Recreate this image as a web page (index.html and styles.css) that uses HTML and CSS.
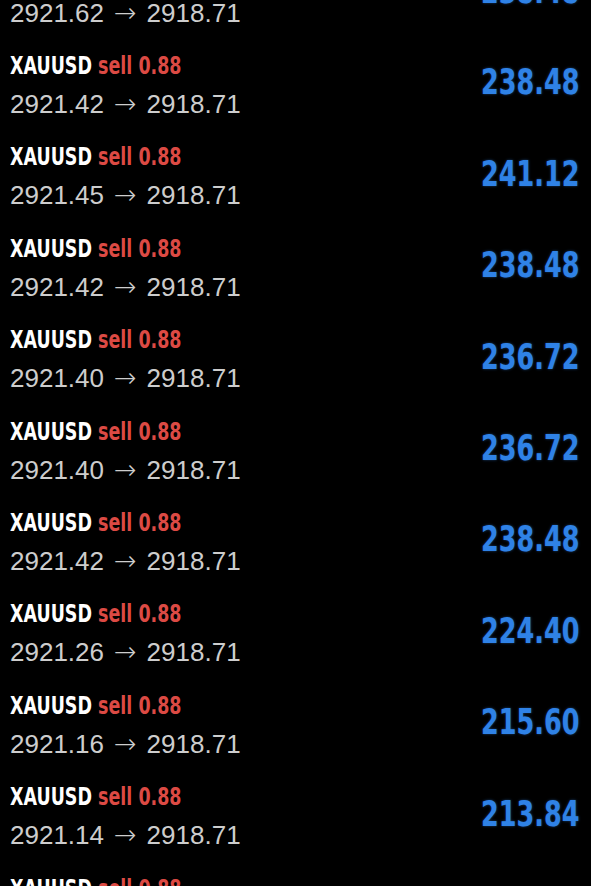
FILE: index.html
```html
<!DOCTYPE html>
<html lang="en">
<head>
  <meta charset="UTF-8" />
  <meta name="viewport" content="width=device-width, initial-scale=1.0"/>
  <title>Trades</title>
  <link rel="stylesheet" href="styles.css">
</head>
<body>
  <div class="trade-list">
    <div class="trade">
      <div class="info">
        <div class="title"><span class="symbol">XAUUSD</span> <span class="side">sell 0.88</span></div>
        <div class="prices">2921.62<span class="arrow">→</span>2918.71</div>
      </div>
      <div class="profit">238.48</div>
    </div>
    <div class="trade">
      <div class="info">
        <div class="title"><span class="symbol">XAUUSD</span> <span class="side">sell 0.88</span></div>
        <div class="prices">2921.42<span class="arrow">→</span>2918.71</div>
      </div>
      <div class="profit">238.48</div>
    </div>
    <div class="trade">
      <div class="info">
        <div class="title"><span class="symbol">XAUUSD</span> <span class="side">sell 0.88</span></div>
        <div class="prices">2921.45<span class="arrow">→</span>2918.71</div>
      </div>
      <div class="profit">241.12</div>
    </div>
    <div class="trade">
      <div class="info">
        <div class="title"><span class="symbol">XAUUSD</span> <span class="side">sell 0.88</span></div>
        <div class="prices">2921.42<span class="arrow">→</span>2918.71</div>
      </div>
      <div class="profit">238.48</div>
    </div>
    <div class="trade">
      <div class="info">
        <div class="title"><span class="symbol">XAUUSD</span> <span class="side">sell 0.88</span></div>
        <div class="prices">2921.40<span class="arrow">→</span>2918.71</div>
      </div>
      <div class="profit">236.72</div>
    </div>
    <div class="trade">
      <div class="info">
        <div class="title"><span class="symbol">XAUUSD</span> <span class="side">sell 0.88</span></div>
        <div class="prices">2921.40<span class="arrow">→</span>2918.71</div>
      </div>
      <div class="profit">236.72</div>
    </div>
    <div class="trade">
      <div class="info">
        <div class="title"><span class="symbol">XAUUSD</span> <span class="side">sell 0.88</span></div>
        <div class="prices">2921.42<span class="arrow">→</span>2918.71</div>
      </div>
      <div class="profit">238.48</div>
    </div>
    <div class="trade">
      <div class="info">
        <div class="title"><span class="symbol">XAUUSD</span> <span class="side">sell 0.88</span></div>
        <div class="prices">2921.26<span class="arrow">→</span>2918.71</div>
      </div>
      <div class="profit">224.40</div>
    </div>
    <div class="trade">
      <div class="info">
        <div class="title"><span class="symbol">XAUUSD</span> <span class="side">sell 0.88</span></div>
        <div class="prices">2921.16<span class="arrow">→</span>2918.71</div>
      </div>
      <div class="profit">215.60</div>
    </div>
    <div class="trade">
      <div class="info">
        <div class="title"><span class="symbol">XAUUSD</span> <span class="side">sell 0.88</span></div>
        <div class="prices">2921.14<span class="arrow">→</span>2918.71</div>
      </div>
      <div class="profit">213.84</div>
    </div>
    <div class="trade">
      <div class="info">
        <div class="title"><span class="symbol">XAUUSD</span> <span class="side">sell 0.88</span></div>
        <div class="prices">2921.14<span class="arrow">→</span>2918.71</div>
      </div>
      <div class="profit">213.84</div>
    </div>
  </div>
</body>
</html>
```

FILE: styles.css
```css
html, body {
  margin: 0;
  padding: 0;
  background-color: #000;
  height: 886px;
  overflow: hidden;
}

.trade-list {
  margin-top: -51.6px;
}

.trade {
  height: 91.4px;
  display: flex;
  align-items: center;
  justify-content: space-between;
  padding: 0 11px 0 10px;
}

/* no narrow face installed, so squeeze the condensed one */
.title {
  font-family: 'DejaVu Sans Condensed', sans-serif;
  font-weight: bold;
  font-size: 24px;
  line-height: 37px;
  color: #fff;
  white-space: nowrap;
  transform: scaleX(0.81);
  transform-origin: left center;
}

.side {
  color: #dc4a44;
}

.prices {
  font-family: 'Liberation Sans', Arial, sans-serif;
  font-size: 26px;
  line-height: 37px;
  color: #cdcdcd;
}

.arrow {
  font-family: 'DejaVu Sans', sans-serif;
  font-weight: 300;
  font-size: 27px;
  margin: 0 10px 0 10px;
}

.profit {
  font-family: 'DejaVu Sans Condensed', sans-serif;
  font-weight: bold;
  font-size: 35px;
  color: #2f82e6;
  margin-bottom: 6px;
  transform: scaleX(0.81);
  transform-origin: right center;
  text-shadow: 0 0 3px rgba(47, 130, 230, 0.5);
}
```
